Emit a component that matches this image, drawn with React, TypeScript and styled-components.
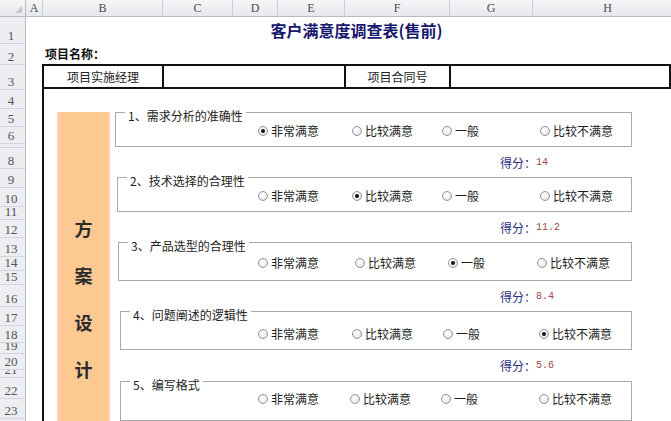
import React from 'react';
import styled, { createGlobalStyle } from 'styled-components';

const GlobalStyle = createGlobalStyle`
  html, body {
    margin: 0;
    padding: 0;
    background: #fff;
    overflow: hidden;
  }

  body {
    font-family: "Noto Sans CJK SC", "Noto Sans", sans-serif;
  }

  * {
    box-sizing: border-box;
  }
`;

const columns = [
  { name: 'A', width: 17 },
  { name: 'B', width: 120 },
  { name: 'C', width: 70 },
  { name: 'D', width: 45 },
  { name: 'E', width: 67 },
  { name: 'F', width: 105 },
  { name: 'G', width: 83 },
  { name: 'H', width: 150 },
];

const rowHeights = [27, 21, 25, 19, 18, 17, 4, 21, 19, 19, 13, 18, 19, 14, 14, 22, 19, 17, 11, 16, 8, 21, 20, 20];

const OPTION_LABELS = ['非常满意', '比较满意', '一般', '比较不满意'];

const STD_COLS = '94px 90px 98px auto';

const questions = [
  { label: '1、需求分析的准确性', checked: 0, ml: 0, h: 35, top: 11, cols: STD_COLS, score: '14', gap: 30 },
  { label: '2、技术选择的合理性', checked: 1, ml: 2, h: 35, top: 11, cols: STD_COLS, score: '11.2', gap: 30 },
  { label: '3、产品选型的合理性', checked: 2, ml: 3, h: 39, top: 13, cols: '97px 93px 89px auto', score: '8.4', gap: 30 },
  { label: '4、问题阐述的逻辑性', checked: 3, ml: 5, h: 39, top: 15, cols: '94px 91px 96px auto', score: '5.6', gap: 31 },
  { label: '5、编写格式', checked: -1, ml: 5, h: 40, top: 10, cols: '92px 91px 98px auto', score: '', gap: 0 },
];

const Sheet = styled.div`
  display: grid;
  grid-template-columns: 26px 1fr;
  grid-template-rows: 17px 1fr;
  width: 671px;
  height: 421px;
  overflow: hidden;
`;

const Corner = styled.div`
  position: relative;
  background: linear-gradient(#f5f6f8, #e6e8eb);
  border-right: 1px solid #b7bcc3;
  border-bottom: 1px solid #b7bcc3;

  &::after {
    content: '';
    position: absolute;
    right: 3px;
    bottom: 3px;
    border-style: solid;
    border-width: 0 0 7px 7px;
    border-color: transparent transparent #c3c7cd transparent;
  }
`;

const ColHeaders = styled.div`
  display: flex;
  background: linear-gradient(#f5f6f8, #e6e8eb);
  border-bottom: 1px solid #b7bcc3;
  overflow: hidden;
`;

const ColCell = styled.div<{ $w: number }>`
  flex: 0 0 ${(p) => p.$w}px;
  display: flex;
  align-items: center;
  justify-content: center;
  border-right: 1px solid #cbcfd5;
  font-family: "Liberation Serif", serif;
  font-size: 12px;
  color: #4a4a4a;
`;

const RowHeaders = styled.div`
  display: flex;
  flex-direction: column;
  background: #eceef1;
  border-right: 1px solid #b7bcc3;
  overflow: hidden;
`;

const RowCell = styled.div<{ $h: number }>`
  flex: 0 0 ${(p) => p.$h}px;
  display: flex;
  align-items: flex-end;
  justify-content: center;
  padding: 0 3px 2px 0;
  border-bottom: 1px solid #d2d6dc;
  font-family: "Liberation Serif", serif;
  font-size: 13px;
  line-height: 11px;
  color: #555;
  overflow: hidden;
`;

const Content = styled.div`
  display: flex;
  flex-direction: column;
  padding-left: 16px;
  min-width: 0;
  overflow: hidden;
`;

const Title = styled.h1`
  margin: 0;
  height: 27px;
  display: flex;
  align-items: center;
  justify-content: center;
  font-size: 16px;
  font-weight: 700;
  color: #16166e;
`;

const NameRow = styled.div`
  height: 21px;
  display: flex;
  align-items: flex-end;
  padding: 0 0 3px 3px;
  font-size: 12px;
  line-height: 14px;
  font-weight: 700;
  color: #111;
`;

const InfoTable = styled.div`
  display: grid;
  grid-template-columns: 120px 182px 105px 1fr;
  height: 25px;
  border: 2px solid #111;
`;

const InfoCell = styled.div`
  display: flex;
  align-items: center;
  justify-content: center;
  border-right: 2px solid #111;
  font-size: 12px;
  color: #222;

  &:last-child {
    border-right: none;
  }
`;

const Body = styled.div`
  flex: 1;
  display: flex;
  gap: 5px;
  padding: 23px 0 0 13px;
  border-left: 2px solid #111;
`;

const SideBar = styled.div`
  flex: 0 0 53px;
  display: flex;
  flex-direction: column;
  align-items: center;
  gap: 29px;
  padding-top: 107px;
  background: linear-gradient(to right, #fdd8b2 0, #fcc993 4px, #fcc993 49px, #fdd8b2 100%);
  font-size: 18px;
  line-height: 18px;
  font-weight: 700;
  color: #2b2b2b;
`;

const GroupList = styled.div`
  flex: 0 0 517px;
  display: flex;
  flex-direction: column;
`;

const GroupBox = styled.div<{ $ml: number; $h: number }>`
  position: relative;
  flex: 0 0 ${(p) => p.$h}px;
  margin-left: ${(p) => p.$ml}px;
  border: 1px solid #a9a9a9;
`;

const Caption = styled.span`
  position: absolute;
  top: -4px;
  left: 9px;
  padding: 0 3px;
  background: #fff;
  font-size: 12px;
  line-height: 14px;
  color: #222;
  white-space: nowrap;
`;

const Options = styled.div<{ $ml: number; $top: number; $cols: string }>`
  display: grid;
  grid-template-columns: ${(p) => p.$cols};
  margin-top: ${(p) => p.$top}px;
  padding-left: ${(p) => 142 - p.$ml}px;
`;

const Option = styled.label`
  display: flex;
  align-items: center;
  gap: 3px;
  font-size: 12px;
  line-height: 14px;
  color: #1c1c1c;
  white-space: nowrap;
`;

const Radio = styled.span<{ $checked: boolean }>`
  position: relative;
  flex: 0 0 10px;
  width: 10px;
  height: 10px;
  border-radius: 50%;
  border: 1px solid #959595;
  background: radial-gradient(circle at 40% 40%, #ffffff 0, #f2f2f2 45%, #d8d8d8 100%);

  &::after {
    content: '';
    display: ${(p) => (p.$checked ? 'block' : 'none')};
    position: absolute;
    left: 2px;
    top: 2px;
    width: 4px;
    height: 4px;
    border-radius: 50%;
    background: #111;
  }
`;

const ScoreRow = styled.div<{ $h: number }>`
  flex: 0 0 ${(p) => p.$h}px;
  display: flex;
  align-items: center;
  padding-left: 385px;
  font-size: 12px;
  color: #2e2e80;
`;

const ScoreValue = styled.span`
  font-family: "Liberation Mono", monospace;
  font-size: 10px;
  color: #a04646;
`;

const App = () => (
  <>
    <GlobalStyle />
    <Sheet>
      <Corner />
      <ColHeaders>
        {columns.map((c) => (
          <ColCell key={c.name} $w={c.width}>{c.name}</ColCell>
        ))}
      </ColHeaders>
      <RowHeaders>
        {rowHeights.map((h, i) => (
          <RowCell key={i} $h={h}>{i + 1}</RowCell>
        ))}
      </RowHeaders>
      <Content>
        <Title>客户满意度调查表(售前)</Title>
        <NameRow>项目名称：</NameRow>
        <InfoTable>
          <InfoCell>项目实施经理</InfoCell>
          <InfoCell />
          <InfoCell>项目合同号</InfoCell>
          <InfoCell />
        </InfoTable>
        <Body>
          <SideBar>
            <span>方</span>
            <span>案</span>
            <span>设</span>
            <span>计</span>
          </SideBar>
          <GroupList>
            {questions.map((q) => (
              <React.Fragment key={q.label}>
                <GroupBox $ml={q.ml} $h={q.h}>
                  <Caption>{q.label}</Caption>
                  <Options $ml={q.ml} $top={q.top} $cols={q.cols}>
                    {OPTION_LABELS.map((o, i) => (
                      <Option key={o}>
                        <Radio $checked={q.checked === i} />
                        {o}
                      </Option>
                    ))}
                  </Options>
                </GroupBox>
                {q.score && (
                  <ScoreRow $h={q.gap}>
                    得分：<ScoreValue>{q.score}</ScoreValue>
                  </ScoreRow>
                )}
              </React.Fragment>
            ))}
          </GroupList>
        </Body>
      </Content>
    </Sheet>
  </>
);

export default App;
